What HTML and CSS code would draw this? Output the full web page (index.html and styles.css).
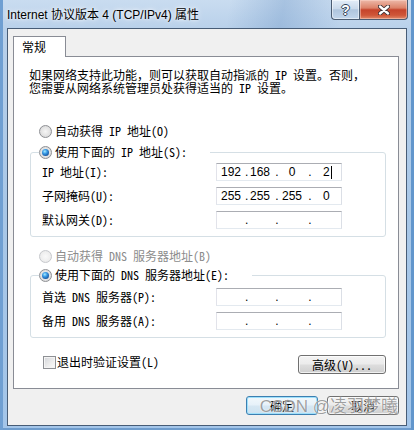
FILE: index.html
```html
<!DOCTYPE html>
<html lang="zh-CN">
<head>
<meta charset="utf-8">
<title>Internet 协议版本 4 (TCP/IPv4) 属性</title>
<link rel="stylesheet" href="styles.css">
</head>
<body>
<div class="window">
  <div class="titlebar">
    <span class="title">Internet 协议版本 4 (TCP/IPv4) 属性</span>
    <div class="caption">
      <div class="cbtn help"><span class="q">?</span></div>
      <div class="cbtn close">
        <svg width="12" height="10" viewBox="0 0 12 10">
          <path d="M2 1.5 L10 8.5 M10 1.5 L2 8.5" stroke="#3a2f33" stroke-width="4.2" stroke-linecap="round"/>
          <path d="M2 1.5 L10 8.5 M10 1.5 L2 8.5" stroke="#ffffff" stroke-width="2.4" stroke-linecap="round"/>
        </svg>
      </div>
    </div>
  </div>
  <div class="client">
    <div class="tabs"><div class="tab">常规</div></div>
    <div class="panel">
      <p class="intro">如果网络支持此功能，则可以获取自动指派的 IP 设置。否则，<br>您需要从网络系统管理员处获得适当的 IP 设置。</p>
      <div class="opt r1"><span class="radio"></span><span>自动获得 IP 地址(O)</span></div>
      <fieldset class="group g1">
        <legend><span class="opt"><span class="radio on"></span><span>使用下面的 IP 地址(S):</span></span></legend>
        <div class="fields">
          <label>IP 地址(I):</label>
          <div class="ip"><span class="s1">192</span><span class="d1">.</span><span class="s2">168</span><span class="d2">.</span><span class="s3">0</span><span class="d3">.</span><span class="s4">2<span class="caret"></span></span></div>
          <label>子网掩码(U):</label>
          <div class="ip"><span class="s1">255</span><span class="d1">.</span><span class="s2">255</span><span class="d2">.</span><span class="s3">255</span><span class="d3">.</span><span class="s4">0</span></div>
          <label>默认网关(D):</label>
          <div class="ip"><span class="s1"></span><span class="d1">.</span><span class="s2"></span><span class="d2">.</span><span class="s3"></span><span class="d3">.</span><span class="s4"></span></div>
        </div>
      </fieldset>
      <div class="opt r3 disabled"><span class="radio off"></span><span>自动获得 DNS 服务器地址(B)</span></div>
      <fieldset class="group g2">
        <legend><span class="opt"><span class="radio on"></span><span>使用下面的 DNS 服务器地址(E):</span></span></legend>
        <div class="fields">
          <label>首选 DNS 服务器(P):</label>
          <div class="ip"><span class="s1"></span><span class="d1">.</span><span class="s2"></span><span class="d2">.</span><span class="s3"></span><span class="d3">.</span><span class="s4"></span></div>
          <label>备用 DNS 服务器(A):</label>
          <div class="ip"><span class="s1"></span><span class="d1">.</span><span class="s2"></span><span class="d2">.</span><span class="s3"></span><span class="d3">.</span><span class="s4"></span></div>
        </div>
      </fieldset>
      <div class="tail">
        <div class="chk-label"><span class="check"></span><span>退出时验证设置(L)</span></div>
        <button class="btn adv">高级(V)...</button>
      </div>
    </div>
    <div class="dlg-btns">
      <button class="btn default">确定</button>
      <button class="btn">取消</button>
    </div>
  </div>
  <div class="watermark">CSDN @凌羽梦曦</div>
</div>
</body>
</html>
```
FILE: styles.css
```css
body {
  margin: 0;
  background: #ffffff;
}

.window {
  width: 414px;
  height: 430px;
  box-sizing: border-box;
  position: relative;
  display: flex;
  flex-direction: column;
  overflow: hidden;
  background: linear-gradient(180deg, #c9dcf0 0%, #b8d0ea 7%, #a8c7e7 50%, #a3c5e9 100%);
  box-shadow: inset 3px 0 0 #6f9fd2, inset -3px 0 0 #6296cc, inset 0 -2px 0 #6e9ccd;
  font-family: "Noto Sans Mono CJK SC", "Noto Sans CJK SC", sans-serif;
  font-size: 12px;
  color: #000;
}

/* title bar */
.titlebar {
  height: 28px;
  flex: none;
  display: flex;
  align-items: flex-start;
  background: linear-gradient(100deg, rgba(255,255,255,0) 55%, rgba(70,120,180,0.25) 68%, rgba(255,255,255,0) 82%);
}

.title {
  margin-top: 7px;
  padding-left: 7px;
  line-height: 16px;
  font-family: "Liberation Sans", "Noto Sans CJK SC", sans-serif;
  font-size: 12px;
  color: #000;
  text-shadow: 0 0 6px rgba(255,255,255,0.95), 0 0 3px rgba(255,255,255,0.9);
}

.caption {
  margin-left: auto;
  margin-right: 6px;
  display: flex;
  height: 20px;
}

.cbtn {
  height: 20px;
  box-sizing: border-box;
  border: 1px solid #4b5c72;
  border-top: none;
  display: flex;
  align-items: center;
  justify-content: center;
}

.help {
  width: 28px;
  border-right: none;
  border-radius: 0 0 0 4px;
  background: linear-gradient(180deg, #e3edf8 0%, #cbdaeb 45%, #afc5de 52%, #c2d6ec 100%);
  box-shadow: inset 0 0 0 1px rgba(255,255,255,0.5);
}

.q {
  font-family: "Liberation Sans", sans-serif;
  font-weight: bold;
  font-size: 14px;
  line-height: 14px;
  color: #fff;
  text-shadow: 1px 0 0 #34465b, -1px 0 0 #34465b, 0 1px 0 #34465b, 0 -1px 0 #34465b;
}

.close {
  width: 49px;
  border-radius: 0 0 4px 0;
  background: linear-gradient(180deg, #edb9a9 0%, #dc8269 42%, #c5432b 52%, #cf5638 80%, #e08a6a 100%);
  box-shadow: inset 0 0 0 1px rgba(255,220,210,0.45);
}

/* client area */
.client {
  flex: 1;
  margin: 0 7px 4px 7px;
  border: 1px solid #475c76;
  background: #f0f0f0;
  padding: 7px 7px 10px 5px;
  display: flex;
  flex-direction: column;
}

.tabs {
  height: 20px;
  display: flex;
}

.tab {
  position: relative;
  z-index: 1;
  width: 53px;
  height: 21px;
  box-sizing: border-box;
  border: 1px solid #898c95;
  border-bottom: none;
  background: #fff;
  padding-left: 8px;
  line-height: 19px;
}

.panel {
  border: 1px solid #898c95;
  background: #fff;
  padding: 11px 12px 14px 15px;
}

.intro {
  margin: 0;
  line-height: 13px;
}

.opt {
  display: flex;
  align-items: center;
  height: 16px;
  line-height: 16px;
  white-space: nowrap;
}

.r1 { margin-left: 10px; margin-top: 29px; }
.r3 { margin-left: 10px; margin-top: 11px; }

.disabled { color: #8c8c8c; }

.radio {
  position: relative;
  flex: none;
  width: 13px;
  height: 13px;
  box-sizing: border-box;
  border-radius: 50%;
  border: 1px solid #8e9094;
  background: radial-gradient(circle at 50% 50%, #f6f6f6 0%, #e3e3e3 55%, #cfd0d2 100%);
  margin-right: 3px;
}

.radio.on::after {
  content: "";
  position: absolute;
  left: 2px;
  top: 2px;
  width: 7px;
  height: 7px;
  border-radius: 50%;
  background: radial-gradient(circle at 40% 35%, #a6ecff 0%, #3a9be6 35%, #114c96 80%, #0b3a78 100%);
}

.radio.off {
  border-color: #c6c8cc;
  background: radial-gradient(circle at 50% 50%, #f9f9f9 0%, #eeeeee 60%, #e2e2e2 100%);
}

.group {
  margin: 5px 0 0 1px;
  padding: 3px 0 7px 8px;
  border: 1px solid #d5dfe5;
  border-radius: 3px;
  min-width: 0;
}

.g2 {
  margin-top: 3px;
  padding-top: 5px;
}

.group legend {
  display: block;
  height: 16px;
  padding: 0 23px 0 0;
  margin: 0;
}

.fields {
  display: grid;
  grid-template-columns: 174px 126px;
  grid-auto-rows: 18px;
  row-gap: 6px;
  margin-left: 3px;
  align-items: center;
}

.fields label {
  line-height: 16px;
  white-space: nowrap;
}

.ip {
  height: 18px;
  box-sizing: border-box;
  border: 1px solid;
  border-color: #abadb3 #dbdfe6 #e3e9ef #e2e3ea;
  background: #fff;
  display: flex;
  font-family: "Liberation Sans", sans-serif;
  font-size: 12px;
  line-height: 16px;
}

.ip span { display: block; text-align: center; }
.ip .s1 { width: 28px; }
.ip .d1 { width: 3px; }
.ip .s2 { width: 24px; }
.ip .d2 { width: 10px; }
.ip .s3 { width: 20px; }
.ip .d3 { width: 16px; }
.ip .s4 { width: 23px; text-align: left; padding-left: 5px; box-sizing: border-box; display: flex; align-items: center; }

.ip .caret {
  display: inline-block;
  width: 1px;
  height: 13px;
  background: #000;
  margin-left: 1px;
}

.tail {
  margin-top: 17px;
  height: 19px;
  display: flex;
  align-items: center;
  justify-content: space-between;
}

.chk-label {
  display: flex;
  align-items: center;
  margin-left: 14px;
  margin-bottom: 5px;
  line-height: 16px;
}

.check {
  flex: none;
  width: 13px;
  height: 13px;
  box-sizing: border-box;
  border: 1px solid #8e9094;
  background: linear-gradient(135deg, #d2d4d8 0%, #eeeeee 60%, #fbfbfb 100%);
  box-shadow: inset 0 0 0 1px #f4f4f4;
  margin-right: 1px;
}

.btn {
  height: 19px;
  box-sizing: border-box;
  padding: 0;
  border: 1px solid #707070;
  border-radius: 3px;
  background: linear-gradient(180deg, #f3f3f3 0%, #ebebeb 48%, #dddddd 52%, #cfcfcf 100%);
  box-shadow: inset 0 0 0 1px rgba(255,255,255,0.7);
  font-family: "Noto Sans Mono CJK SC", "Noto Sans CJK SC", sans-serif;
  font-size: 12px;
  line-height: 17px;
  color: #000;
}

.adv { width: 88px; }

.dlg-btns {
  margin-top: 7px;
  display: flex;
  justify-content: flex-end;
  gap: 9px;
}

.dlg-btns .btn { width: 72px; }

.btn.default {
  border-color: #3c7fb1;
  box-shadow: inset 0 0 0 1px #9ee0fb;
  background: linear-gradient(180deg, #f2f8fc 0%, #e6f1f9 48%, #d6e7f3 52%, #cde2f0 100%);
}

.watermark {
  position: absolute;
  right: 16px;
  top: 397px;
  font-family: "Liberation Sans", "Noto Sans CJK SC", sans-serif;
  font-size: 17px;
  line-height: 20px;
  color: rgba(95, 95, 95, 0.6);
  text-shadow: 0 0 1px rgba(255,255,255,0.9), 0 0 2px rgba(255,255,255,0.6);
  pointer-events: none;
}
```
